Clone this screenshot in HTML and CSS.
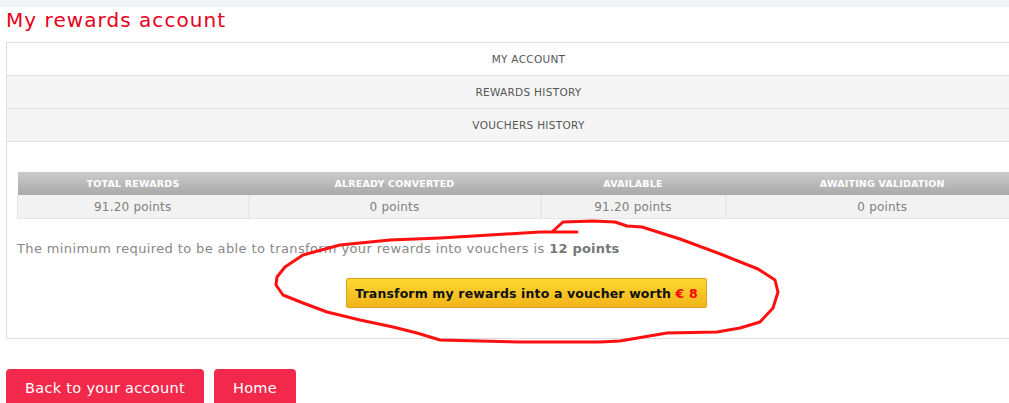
FILE: index.html
```html
<!DOCTYPE html>
<html lang="en">
<head>
<meta charset="utf-8">
<title>My rewards account</title>
<link rel="stylesheet" href="styles.css">
</head>
<body>
<div class="topbar"></div>
<main class="page">
  <h1 class="title">My rewards account</h1>
  <section class="panel">
    <nav class="tabs">
      <a class="tab tab-active">My account</a>
      <a class="tab">Rewards history</a>
      <a class="tab">Vouchers history</a>
    </nav>
    <div class="panel-body">
      <table class="summary">
        <thead>
          <tr>
            <th class="c1">Total rewards</th>
            <th class="c2">Already converted</th>
            <th class="c3">Available</th>
            <th class="c4">Awaiting validation</th>
          </tr>
        </thead>
        <tbody>
          <tr>
            <td>91.20 points</td>
            <td>0 points</td>
            <td>91.20 points</td>
            <td>0 points</td>
          </tr>
        </tbody>
      </table>
      <p class="note">The minimum required to be able to transform your rewards into vouchers is <strong>12 points</strong></p>
      <div class="action">
        <button class="btn-voucher">Transform my rewards into a voucher worth <span class="amount">€ 8</span></button>
      </div>
    </div>
  </section>
  <div class="footer-actions">
    <a class="btn-red">Back to your account</a>
    <a class="btn-red">Home</a>
  </div>
</main>
<svg class="scribble" width="1009" height="403" viewBox="0 0 1009 403" aria-hidden="true">
  <polyline points="577,232 540,232 490,235 440,238 390,240 340,245 303,255 285,267 277,277 276,285 283,295 303,303 327,312 360,320 393,327 417,333 440,340 520,342 600,342 620,341 667,333 717,332 740,328 760,322 773,308 778,292 775,280 758,269 723,255 680,239 642,227 627,226 615,222 593,221 563,222 553,231" fill="none" stroke="#ff1010" stroke-width="3" stroke-linejoin="round" stroke-linecap="round"/>
</svg>
</body>
</html>
```

FILE: styles.css
```css
html, body {
  margin: 0;
  padding: 0;
  overflow: hidden;
  background: #fff;
}
body {
  font-family: "DejaVu Sans", "Noto Sans", sans-serif;
  color: #777;
  position: relative;
  width: 1009px;
  height: 403px;
}
.topbar {
  height: 7px;
  background: #f2f3f7;
}
.page {
  padding: 0 0 0 6px;
}
.title {
  margin: 0;
  padding-top: 1px;
  height: 34px;
  font-size: 20px;
  line-height: 24px;
  font-weight: 400;
  color: #e8001c;
  letter-spacing: 1.05px;
}
.panel {
  width: 1043px;
  border: 1px solid #dedede;
}
.tabs {
  display: flex;
  flex-direction: column;
}
.tab {
  display: flex;
  align-items: center;
  justify-content: center;
  height: 32px;
  border-bottom: 1px solid #dedede;
  background: #f5f5f5;
  color: #555;
  font-size: 10.5px;
  text-transform: uppercase;
  letter-spacing: 0.3px;
}
.tab-active {
  background: #fff;
}
.panel-body {
  padding: 30px 14px 30px 10px;
}
.summary {
  width: 1023px;
  border-collapse: collapse;
  table-layout: fixed;
}
.summary th {
  height: 23px;
  padding: 0;
  background: linear-gradient(#cbcbcb, #a9a9a9);
  color: #fff;
  font-size: 9.5px;
  font-weight: 700;
  text-transform: uppercase;
  letter-spacing: 0.2px;
}
.summary .c1 { width: 231px; }
.summary .c2 { width: 292px; }
.summary .c3 { width: 185px; }
.summary td {
  height: 23px;
  padding: 0;
  text-align: center;
  background: #f2f2f2;
  border: 2px solid #e8e8e8;
  border-top: 0;
  border-bottom: 1px solid #e6e6e6;
  color: #808080;
  font-size: 12px;
  letter-spacing: 0.2px;
}
.summary td:first-child {
  border-left: 1px solid #e6e6e6;
}
.note {
  margin: 20px 0 0 0;
  font-size: 13px;
  line-height: 20px;
  color: #888;
  letter-spacing: 0.38px;
}
.note strong {
  color: #777;
  font-weight: 700;
  letter-spacing: 0.2px;
}
.action {
  display: flex;
  justify-content: center;
  margin-top: 19px;
}
.btn-voucher {
  height: 30px;
  padding: 0 8px;
  border: 1px solid #d6a31a;
  border-radius: 2px;
  background: linear-gradient(#fcd830, #f2b41a);
  color: #111;
  font-family: "DejaVu Sans", "Noto Sans", sans-serif;
  font-size: 12.5px;
  font-weight: 700;
  letter-spacing: 0.15px;
}
.btn-voucher .amount {
  color: #f00;
}
.footer-actions {
  display: flex;
  gap: 10px;
  margin-top: 30px;
}
.btn-red {
  display: flex;
  align-items: center;
  height: 37px;
  padding: 0 19px;
  border-radius: 4px;
  background: #f2294a;
  color: #fff;
  font-size: 14.5px;
  letter-spacing: 0.3px;
}
.scribble {
  position: absolute;
  top: 0;
  left: 0;
  pointer-events: none;
}
```
